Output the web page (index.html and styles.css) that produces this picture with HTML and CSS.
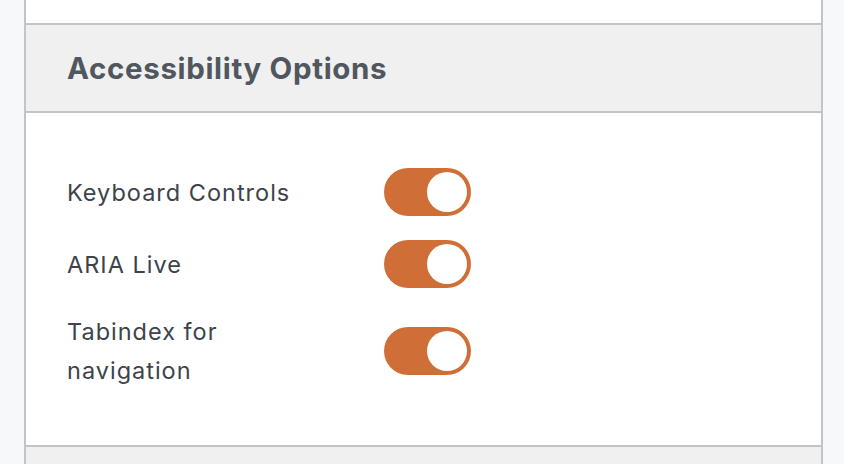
FILE: index.html
```html
<!DOCTYPE html>
<html lang="en">
  <head>
    <meta charset="UTF-8" />
    <title>Accessibility Options</title>
    <link rel="stylesheet" href="styles.css">
  </head>
  <body>
    <div class="panel">
      <div class="panel-top"></div>

      <div class="postbox">
        <h2 class="postbox-header">Accessibility Options</h2>
        <div class="postbox-inside">
          <div class="option-row">
            <span class="option-label">Keyboard Controls</span>
            <label class="toggle">
              <input type="checkbox" checked />
              <span class="toggle-track"></span>
            </label>
          </div>
          <div class="option-row">
            <span class="option-label">ARIA Live</span>
            <label class="toggle">
              <input type="checkbox" checked />
              <span class="toggle-track"></span>
            </label>
          </div>
          <div class="option-row">
            <span class="option-label">Tabindex for navigation</span>
            <label class="toggle">
              <input type="checkbox" checked />
              <span class="toggle-track"></span>
            </label>
          </div>
        </div>
      </div>

      <div class="postbox-next"></div>
    </div>
  </body>
</html>
```

FILE: styles.css
```css
body {
  margin: 0;
  background-color: #f7f8fa;
  font-family: Inter, "Noto Sans", "Liberation Sans", sans-serif;
  overflow: hidden;
}
.panel {
  margin: 0 21px 0 24px;
  border-left: 2px solid #c3c4c7;
  border-right: 2px solid #c3c4c7;
  height: 464px;
  display: flex;
  flex-direction: column;
}
.panel > div {
  flex-shrink: 0;
}
.panel-top {
  height: 23px;
  background-color: #fff;
  border-bottom: 2px solid #c3c4c7;
}
.postbox {
  background-color: #fff;
}
.postbox-header {
  margin: 0;
  height: 86px;
  display: flex;
  align-items: center;
  padding: 0 41px;
  background-color: #f0f0f1;
  border-bottom: 2px solid #c3c4c7;
  color: #50575e;
  font-size: 29.5px;
  font-weight: 700;
  letter-spacing: 0.65px;
}
.postbox-inside {
  padding: 43px 41px 43px;
  border-bottom: 2px solid #c3c4c7;
}
.option-row {
  display: grid;
  grid-template-columns: 317px auto;
  align-items: center;
  padding: 12px 0;
  min-height: 48px;
}
.option-label {
  color: #3c434a;
  font-size: 23.5px;
  letter-spacing: 1px;
  line-height: 39px;
  max-width: 250px;
}
.toggle {
  position: relative;
  display: inline-block;
  width: 87px;
  height: 48px;
}
.toggle input {
  position: absolute;
  opacity: 0;
  width: 0;
  height: 0;
}
.toggle-track {
  position: absolute;
  inset: 0;
  background-color: #cf6f37;
  border-radius: 24px;
  cursor: pointer;
}
.toggle-track::after {
  content: "";
  position: absolute;
  top: 4px;
  left: 4px;
  width: 40px;
  height: 40px;
  border-radius: 50%;
  background-color: #fff;
  transition: transform 0.2s ease;
}
.toggle input:checked + .toggle-track::after {
  transform: translateX(39px);
}
.postbox-next {
  flex: 1 1 auto;
  background-color: #f0f0f1;
}
```
